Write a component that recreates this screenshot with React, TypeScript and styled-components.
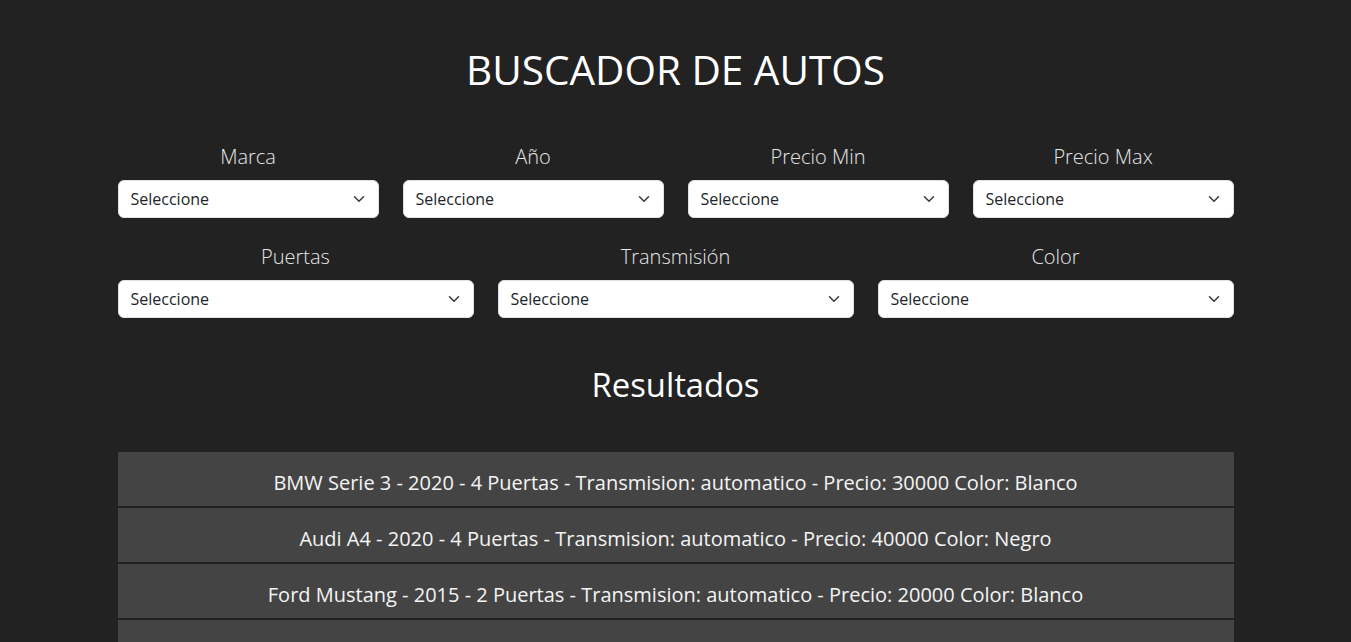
import React from "react";
import styled, { createGlobalStyle } from "styled-components";

const GlobalStyle = createGlobalStyle`
  html, body {
    margin: 0;
    padding: 0;
    background: #222222;
    font-family: "Open Sans", "Noto Sans", sans-serif;
    color: #ffffff;
  }
  * { box-sizing: border-box; }
`;

const Container = styled.div`
  max-width: 1140px;
  margin: 0 auto;
  padding: 0 12px;
`;

const Title = styled.h1`
  margin: 46px 0 48px;
  font-size: 40.5px;
  line-height: 48px;
  font-weight: 500;
  text-align: center;
  color: #ffffff;
`;

const FilterGrid = styled.div<{ $cols: number }>`
  display: grid;
  grid-template-columns: repeat(${(p) => p.$cols}, 1fr);
  column-gap: 24px;
  margin-bottom: 24px;
`;

const Field = styled.div`
  display: flex;
  flex-direction: column;
`;

const Label = styled.label`
  font-size: 20px;
  line-height: 30px;
  font-weight: 300;
  text-align: center;
  color: #e6e6e6;
  margin-bottom: 8px;
`;

const SelectWrap = styled.div`
  position: relative;
`;

const Select = styled.select`
  appearance: none;
  -webkit-appearance: none;
  width: 100%;
  height: 38px;
  padding: 6px 36px 6px 12px;
  font-family: "Open Sans", "Noto Sans", sans-serif;
  font-size: 16px;
  line-height: 24px;
  color: #212529;
  background: #ffffff;
  border: 1px solid #dee2e6;
  border-radius: 6px;
  outline: none;
`;

const Chevron = styled.svg`
  position: absolute;
  right: 12px;
  top: 13px;
  width: 16px;
  height: 12px;
  pointer-events: none;
`;

const Subtitle = styled.h2`
  margin: 48px 0 48px;
  font-size: 32.8px;
  line-height: 38px;
  font-weight: 500;
  text-align: center;
  color: #ffffff;
`;

const ResultList = styled.ul`
  list-style: none;
  margin: 0;
  padding: 0;
  display: flex;
  flex-direction: column;
  gap: 2px;
`;

const ResultItem = styled.li`
  height: 54px;
  padding-top: 16px;
  background: #444444;
  font-size: 20px;
  line-height: 30px;
  text-align: center;
  color: #f4f4f4;
`;

const Dropdown: React.FC<{ label: string }> = ({ label }) => (
  <Field>
    <Label>{label}</Label>
    <SelectWrap>
      <Select defaultValue="">
        <option value="">Seleccione</option>
      </Select>
      <Chevron viewBox="0 0 16 16" preserveAspectRatio="xMidYMid meet">
        <path
          d="m2 5 6 6 6-6"
          fill="none"
          stroke="#343a40"
          strokeWidth="2"
          strokeLinecap="round"
          strokeLinejoin="round"
        />
      </Chevron>
    </SelectWrap>
  </Field>
);

const results = [
  "BMW Serie 3 - 2020 - 4 Puertas - Transmision: automatico - Precio: 30000 Color: Blanco",
  "Audi A4 - 2020 - 4 Puertas - Transmision: automatico - Precio: 40000 Color: Negro",
  "Ford Mustang - 2015 - 2 Puertas - Transmision: automatico - Precio: 20000 Color: Blanco",
  "Audi A6 - 2020 - 4 Puertas - Transmision: automatico - Precio: 35000 Color: Negro",
];

export default function App() {
  return (
    <>
      <GlobalStyle />
      <Container>
        <Title>BUSCADOR DE AUTOS</Title>
        <FilterGrid $cols={4}>
          <Dropdown label="Marca" />
          <Dropdown label="Año" />
          <Dropdown label="Precio Min" />
          <Dropdown label="Precio Max" />
        </FilterGrid>
        <FilterGrid $cols={3}>
          <Dropdown label="Puertas" />
          <Dropdown label="Transmisión" />
          <Dropdown label="Color" />
        </FilterGrid>
        <Subtitle>Resultados</Subtitle>
        <ResultList>
          {results.map((r) => (
            <ResultItem key={r}>{r}</ResultItem>
          ))}
        </ResultList>
      </Container>
    </>
  );
}
